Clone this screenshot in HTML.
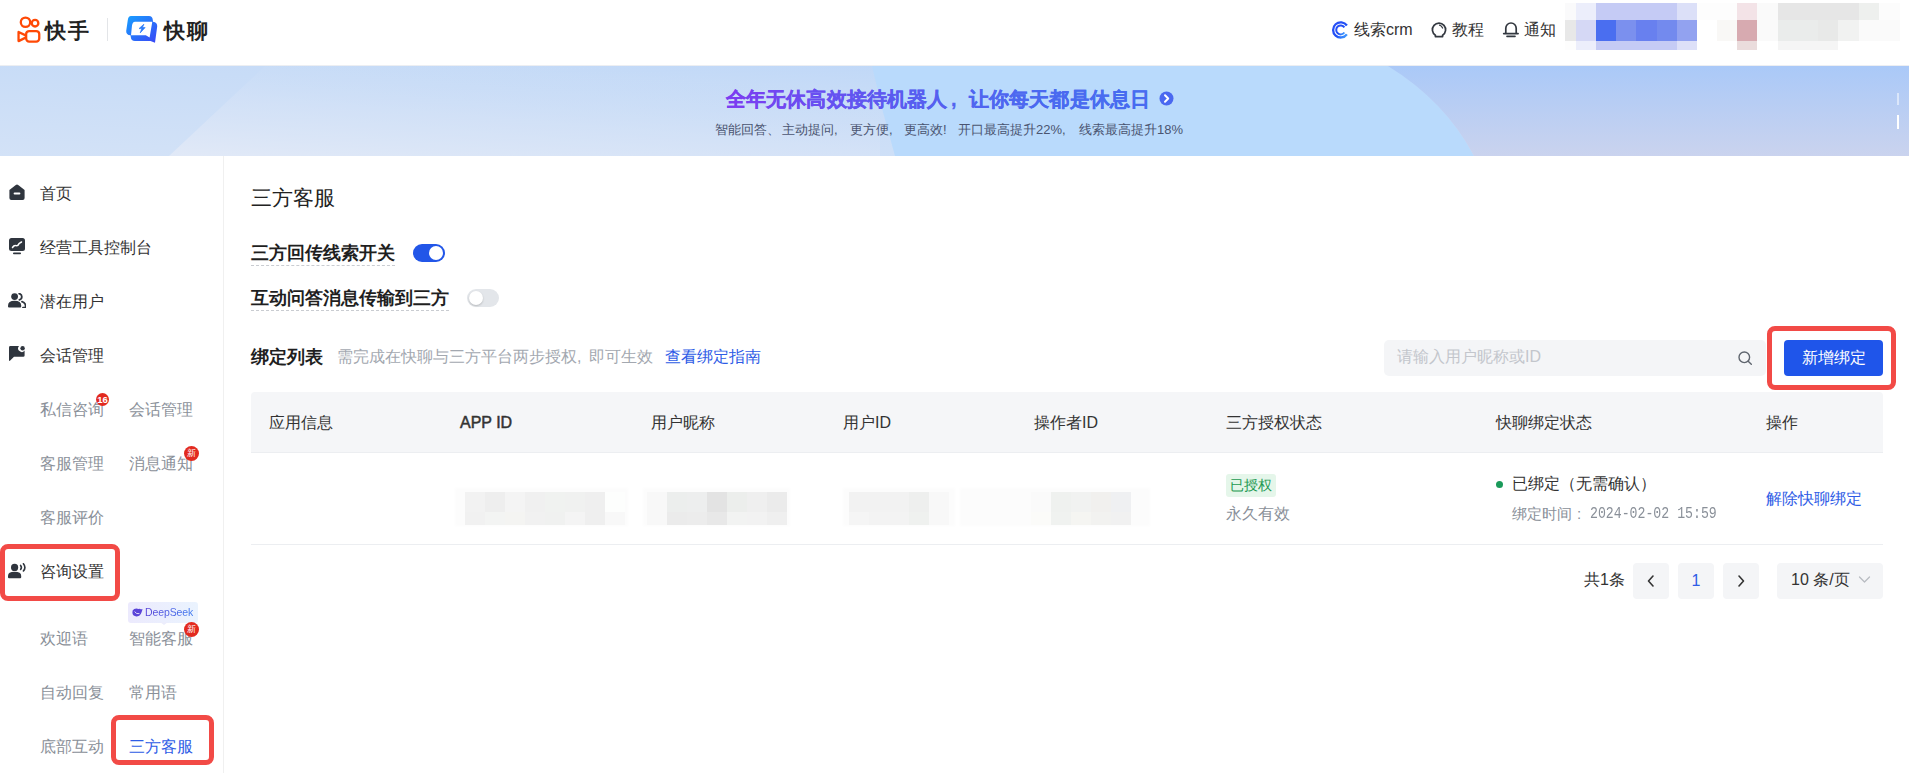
<!DOCTYPE html>
<html><head><meta charset="utf-8">
<style>
*{margin:0;padding:0;box-sizing:border-box}
html,body{width:1909px;height:773px;overflow:hidden;background:#fff;font-family:"Liberation Sans",sans-serif;color:#333}
.a{position:absolute;white-space:nowrap}
#hdr{position:absolute;left:0;top:0;width:1909px;height:66px;background:#fff;border-bottom:1px solid #eceef2}
#banner{position:absolute;left:0;top:66px;width:1909px;height:90px;overflow:hidden;background:#c9dbf6}
#side{position:absolute;left:0;top:156px;width:224px;height:617px;border-right:1px solid #f0f0f0;background:#fff}
.mi{font-size:16px;color:#333}
.si{font-size:16px;color:#8a9099}
.px{position:absolute}
.badge{position:absolute;width:15px;height:15px;border-radius:7.5px;background:#e22a1f;color:#fff;font-size:10px;font-weight:bold;text-align:center;line-height:15px}
.redbox{position:absolute;border:5px solid #f24a46;border-radius:8px}
.th{position:absolute;top:413px;font-size:16px;color:#333}
</style></head><body>

<div id="hdr">
  <!-- kuaishou logo -->
  <svg class="a" style="left:12px;top:12px" width="36" height="36" viewBox="0 0 36 36">
    <circle cx="13.5" cy="10.25" r="4.7" fill="none" stroke="#ff4906" stroke-width="2.3"/>
    <circle cx="23.05" cy="11.2" r="3.3" fill="none" stroke="#ff4906" stroke-width="2.3"/>
    <rect x="14.15" y="19.05" width="13.1" height="10.5" rx="3" fill="none" stroke="#ff4906" stroke-width="2.3"/>
    <path d="M14.15 23.6 L6.55 20 V29.1 L14.15 25.4" fill="none" stroke="#ff4906" stroke-width="2.3" stroke-linejoin="round"/>
  </svg>
  <div class="a" style="left:45px;top:16px;font-size:21px;color:#222;font-weight:bold;letter-spacing:1.5px;line-height:30px">快手</div>
  <div class="a" style="left:107px;top:18px;width:1px;height:23px;background:#e3e5e8"></div>
  <svg class="a" style="left:120px;top:10px" width="45" height="38" viewBox="0 0 45 38">
    <defs><linearGradient id="kl" x1="0" y1="0" x2="1" y2="1"><stop offset="0" stop-color="#18a0ff"/><stop offset="1" stop-color="#3a45f5"/></linearGradient></defs>
    <path d="M11 6 H29 Q32.5 6 32.8 10 L33 11.8 Q37.5 12.5 37.2 16.5 L35 32.8 L30.5 31 H15 Q11 31 10.8 27 L10.5 25.3 Q6 25 6.2 21 L7.8 10 Q8.3 6 11 6 Z" fill="url(#kl)"/>
    <path d="M15 11.7 H32.3 L29.6 27.4 L25.8 25.2 H11 L12 15.5 Q12.5 11.7 15 11.7 Z" fill="#fff"/>
    <path d="M23.9 14.2 L19 18.6 H21.8 L20.2 22.9 L25.1 17.6 H22.4 Z" fill="#2a7af8" stroke="#2a7af8" stroke-width="0.7" stroke-linejoin="round"/>
  </svg>
  <div class="a" style="left:164px;top:16px;font-size:21px;color:#222;font-weight:bold;letter-spacing:1.5px;line-height:30px">快聊</div>

  <!-- right -->
  <svg class="a" style="left:1328px;top:16px" width="30" height="28" viewBox="0 0 30 28">
    <defs><linearGradient id="crm" x1="0" y1="0" x2="1" y2="1"><stop offset="0" stop-color="#2a4ff6"/><stop offset="0.6" stop-color="#1f4ff5"/><stop offset="1" stop-color="#45a8ff"/></linearGradient></defs>
    <path d="M18.9 9.5 A7.6 7.6 0 1 0 18.9 18.3" fill="none" stroke="url(#crm)" stroke-width="2.3" stroke-linecap="butt"/>
    <path d="M16.4 11.3 A4.5 4.5 0 1 0 16.4 16.5" fill="none" stroke="url(#crm)" stroke-width="2" stroke-linecap="butt"/>
  </svg>
  <div class="a" style="left:1354px;top:19px;font-size:16px;line-height:22px;color:#333">线索crm</div>
  <svg class="a" style="left:1428px;top:16px" width="20" height="24" viewBox="0 0 20 24">
    <path d="M7.4 20.6 V19.2 A6.6 6.6 0 1 1 14.6 19.2 V20.6 Z" fill="none" stroke="#333840" stroke-width="1.7" stroke-linejoin="round"/>
    <path d="M11.6 9.2 Q13.6 9.8 14.6 12" fill="none" stroke="#333840" stroke-width="1.3" stroke-linecap="round"/>
  </svg>
  <div class="a" style="left:1452px;top:19px;font-size:16px;line-height:22px;color:#333">教程</div>
  <svg class="a" style="left:1500px;top:16px" width="22" height="24" viewBox="0 0 22 24">
    <path d="M5.8 17.6 V12.2 A5.2 5.2 0 0 1 16.2 12.2 V17.6" fill="none" stroke="#333840" stroke-width="1.7"/>
    <path d="M3.8 17.6 H18" stroke="#333840" stroke-width="1.9" stroke-linecap="round"/>
    <path d="M7 20.4 H15" stroke="#333840" stroke-width="1.6" stroke-linecap="round"/>
  </svg>
  <div class="a" style="left:1524px;top:19px;font-size:16px;line-height:22px;color:#333">通知</div>
  <div id="mosaic" style="position:absolute;left:0;top:0;width:1909px;height:66px;filter:blur(0.7px)">
<div class="a" style="left:1565px;top:3px;width:11px;height:17px;background:#fafafb"></div>
<div class="a" style="left:1576px;top:3px;width:20px;height:17px;background:#eceefb"></div>
<div class="a" style="left:1596px;top:3px;width:81px;height:17px;background:#c5cbf5"></div>
<div class="a" style="left:1677px;top:3px;width:20px;height:17px;background:#dce0f8"></div>
<div class="a" style="left:1697px;top:3px;width:40px;height:17px;background:#fdfdfd"></div>
<div class="a" style="left:1737px;top:3px;width:20px;height:17px;background:#f3e3e7"></div>
<div class="a" style="left:1757px;top:3px;width:21px;height:17px;background:#fafafa"></div>
<div class="a" style="left:1778px;top:3px;width:81px;height:17px;background:#e6e6e6"></div>
<div class="a" style="left:1859px;top:3px;width:20px;height:17px;background:#eef0ee"></div>
<div class="a" style="left:1879px;top:3px;width:21px;height:17px;background:#fcfcfc"></div>
<div class="a" style="left:1565px;top:20px;width:11px;height:21px;background:#e8e8e8"></div>
<div class="a" style="left:1576px;top:20px;width:20px;height:21px;background:#d5d8f5"></div>
<div class="a" style="left:1596px;top:20px;width:20px;height:21px;background:#4a6ef0"></div>
<div class="a" style="left:1616px;top:20px;width:20px;height:21px;background:#7b90ee"></div>
<div class="a" style="left:1636px;top:20px;width:21px;height:21px;background:#6880ef"></div>
<div class="a" style="left:1657px;top:20px;width:20px;height:21px;background:#738aee"></div>
<div class="a" style="left:1677px;top:20px;width:20px;height:21px;background:#92a2f0"></div>
<div class="a" style="left:1697px;top:20px;width:20px;height:21px;background:#ffffff"></div>
<div class="a" style="left:1717px;top:20px;width:20px;height:21px;background:#f9f8f6"></div>
<div class="a" style="left:1737px;top:20px;width:20px;height:21px;background:#d7aab0"></div>
<div class="a" style="left:1757px;top:20px;width:21px;height:21px;background:#fafafa"></div>
<div class="a" style="left:1778px;top:20px;width:40px;height:21px;background:#eaeceb"></div>
<div class="a" style="left:1818px;top:20px;width:20px;height:21px;background:#e8e9e8"></div>
<div class="a" style="left:1838px;top:20px;width:21px;height:21px;background:#f1f2f1"></div>
<div class="a" style="left:1859px;top:20px;width:41px;height:21px;background:#fafafa"></div>
<div class="a" style="left:1565px;top:41px;width:11px;height:9px;background:#fdfdfd"></div>
<div class="a" style="left:1576px;top:41px;width:20px;height:9px;background:#eceefb"></div>
<div class="a" style="left:1596px;top:41px;width:81px;height:9px;background:#c5cbf5"></div>
<div class="a" style="left:1677px;top:41px;width:20px;height:9px;background:#dde0f8"></div>
<div class="a" style="left:1737px;top:41px;width:20px;height:9px;background:#eadcdc"></div>
<div class="a" style="left:1778px;top:41px;width:60px;height:9px;background:#f5f5f5"></div>
</div>
</div>

<div id="banner">
  <svg width="1909" height="90" viewBox="0 0 1909 90" preserveAspectRatio="none" style="position:absolute;left:0;top:0">
    <defs>
      <linearGradient id="bg1" x1="0" y1="1" x2="1" y2="0">
        <stop offset="0" stop-color="#d3e2f7"/><stop offset="0.6" stop-color="#c6dbf7"/><stop offset="1" stop-color="#b5d2f8"/>
      </linearGradient>
      <linearGradient id="bg2" x1="0" y1="1" x2="0.6" y2="0">
        <stop offset="0" stop-color="#e3eaf7" stop-opacity="0.9"/><stop offset="0.5" stop-color="#d8e4f7" stop-opacity="0.5"/><stop offset="1" stop-color="#c8dcf6" stop-opacity="0"/>
      </linearGradient>
      <linearGradient id="bg3" x1="0" y1="0" x2="0" y2="1">
        <stop offset="0" stop-color="#aac9f8"/><stop offset="1" stop-color="#cad3ee"/>
      </linearGradient>
    </defs>
    <rect x="0" y="0" width="1909" height="90" fill="url(#bg1)"/>
    <path d="M265 0 L880 0 L880 90 L169 90 Z" fill="url(#bg2)"/>
    <path d="M872 0 L1388 0 Q1445 35 1474 90 L895 90 Q882 45 872 0 Z" fill="#b9dafc"/>
    <path d="M1388 0 L1909 0 L1909 90 L1474 90 Q1445 35 1388 0 Z" fill="url(#bg3)"/>
    <rect x="1897" y="27" width="2" height="12" fill="#fff" fill-opacity="0.5"/>
    <rect x="1897" y="49" width="2" height="14" fill="#fff"/>
  </svg>
  <div class="a" id="btitle" style="left:726px;top:19px;font-size:20px;line-height:28px;font-weight:bold;letter-spacing:0.1px"><span style="color:#7b3ef1;-webkit-text-stroke:0.3px #7b3ef1">全</span><span style="color:#7642f1;-webkit-text-stroke:0.3px #7642f1">年</span><span style="color:#7147f1;-webkit-text-stroke:0.3px #7147f1">无</span><span style="color:#6d4bf1;-webkit-text-stroke:0.3px #6d4bf1">休</span><span style="color:#694ff1;-webkit-text-stroke:0.3px #694ff1">高</span><span style="color:#6552f1;-webkit-text-stroke:0.3px #6552f1">效</span><span style="color:#6155f0;-webkit-text-stroke:0.3px #6155f0">接</span><span style="color:#5e59f0;-webkit-text-stroke:0.3px #5e59f0">待</span><span style="color:#5a5bf0;-webkit-text-stroke:0.3px #5a5bf0">机</span><span style="color:#575ef0;-webkit-text-stroke:0.3px #575ef0">器</span><span style="color:#5560f0;-webkit-text-stroke:0.3px #5560f0">人</span></div>
  <div class="a" style="left:951px;top:19px;font-size:20px;line-height:28px;font-weight:bold;letter-spacing:0.1px"><span style="color:#5263f0;-webkit-text-stroke:0.3px #5263f0">,</span></div>
  <div class="a" style="left:969px;top:19px;font-size:20px;line-height:28px;font-weight:bold;letter-spacing:0.1px"><span style="color:#5065f0;-webkit-text-stroke:0.3px #5065f0">让</span><span style="color:#4e66f0;-webkit-text-stroke:0.3px #4e66f0">你</span><span style="color:#4d68f0;-webkit-text-stroke:0.3px #4d68f0">每</span><span style="color:#4b69f0;-webkit-text-stroke:0.3px #4b69f0">天</span><span style="color:#4a6af0;-webkit-text-stroke:0.3px #4a6af0">都</span><span style="color:#496bf0;-webkit-text-stroke:0.3px #496bf0">是</span><span style="color:#496cf0;-webkit-text-stroke:0.3px #496cf0">休</span><span style="color:#486cf0;-webkit-text-stroke:0.3px #486cf0">息</span><span style="color:#486cf0;-webkit-text-stroke:0.3px #486cf0">日</span></div>
  <svg class="a" style="left:1159px;top:25px" width="15" height="15" viewBox="0 0 15 15"><circle cx="7.5" cy="7.5" r="7" fill="#4a68f0"/><path d="M6 4.3 L9.2 7.5 L6 10.7" fill="none" stroke="#fff" stroke-width="2" stroke-linecap="round" stroke-linejoin="round"/></svg>
  <div class="a" style="left:715px;top:55px;font-size:13px;line-height:18px;color:#4a5470">智能回答、</div><div class="a" style="left:782px;top:55px;font-size:13px;line-height:18px;color:#4a5470">主动提问,</div><div class="a" style="left:850px;top:55px;font-size:13px;line-height:18px;color:#4a5470">更方便,</div><div class="a" style="left:904px;top:55px;font-size:13px;line-height:18px;color:#4a5470">更高效!</div><div class="a" style="left:958px;top:55px;font-size:13px;line-height:18px;color:#4a5470">开口最高提升22%,</div><div class="a" style="left:1079px;top:55px;font-size:13px;line-height:18px;color:#4a5470">线索最高提升18%</div>
</div>

<div id="side">
  <!-- icons: coordinates relative to page, side top=155 -->
</div>
<!-- sidebar items (page coords) -->
<svg class="a" style="left:9px;top:184px" width="16" height="16" viewBox="0 0 16 16">
  <path d="M0.4 6 L6.8 1 Q8 0.1 9.2 1 L15.6 6 V14 Q15.6 16 13.6 16 H2.4 Q0.4 16 0.4 14 Z" fill="#2f353e"/>
  <rect x="4.6" y="8.6" width="6.8" height="2" rx="1" fill="#fff"/>
</svg>
<div class="a mi" style="left:40px;top:183px;line-height:22px">首页</div>

<svg class="a" style="left:9px;top:238px" width="16" height="17" viewBox="0 0 16 17">
  <rect x="0" y="0" width="16" height="13" rx="2.5" fill="#2f353e"/>
  <path d="M3.5 9.5 Q5 7 7 7.6 Q9 8.2 10.2 5.4 L12.5 4" fill="none" stroke="#fff" stroke-width="1.5" stroke-linecap="round"/>
  <rect x="4" y="14.6" width="8" height="1.6" rx="0.8" fill="#2f353e"/>
</svg>
<div class="a mi" style="left:40px;top:237px;line-height:22px">经营工具控制台</div>

<svg class="a" style="left:8px;top:293px" width="18" height="15" viewBox="0 0 18 15">
  <circle cx="6.6" cy="3.6" r="3.4" fill="#2f353e"/>
  <path d="M0 12.5 Q0 7.8 6.6 7.8 Q13.2 7.8 13.2 12.5 V13.6 Q13.2 14.6 12.2 14.6 H1 Q0 14.6 0 13.6 Z" fill="#2f353e"/>
  <path d="M11.2 0.6 Q13.8 1.2 13.8 3.8 Q13.8 6.2 11.4 6.8" fill="none" stroke="#2f353e" stroke-width="1.8" stroke-linecap="round"/>
  <path d="M14 8.6 Q17.6 9.8 17.6 13 V14.6 H15" fill="none" stroke="#2f353e" stroke-width="1.8" stroke-linecap="round" stroke-linejoin="round"/>
</svg>
<div class="a mi" style="left:40px;top:291px;line-height:22px">潜在用户</div>

<svg class="a" style="left:9px;top:346px" width="16" height="15" viewBox="0 0 16 15">
  <path d="M0 1.4 Q0 0 1.4 0 H10 A3.6 3.6 0 0 0 15.6 4.6 V9.4 Q15.6 10.8 14.2 10.8 H5 L1.2 14.6 Q0 15.4 0 14 Z" fill="#2f353e"/>
  <circle cx="13.6" cy="2.2" r="2.2" fill="#2f353e"/>
</svg>
<div class="a mi" style="left:40px;top:345px;line-height:22px">会话管理</div>

<div class="a si" style="left:40px;top:399px;line-height:22px">私信咨询</div>
<div class="badge" style="left:96px;top:393px;width:13px;height:13px;line-height:13px;font-size:9.5px">16</div>
<div class="a si" style="left:129px;top:399px;line-height:22px">会话管理</div>

<div class="a si" style="left:40px;top:453px;line-height:22px">客服管理</div>
<div class="a si" style="left:129px;top:453px;line-height:22px">消息通知</div>
<div class="badge" style="left:184px;top:446px;font-size:9px;font-weight:normal">新</div>

<div class="a si" style="left:40px;top:507px;line-height:22px">客服评价</div>

<svg class="a" style="left:8px;top:563px" width="19" height="16" viewBox="0 0 19 16">
  <circle cx="6.6" cy="4.4" r="3.6" fill="#2f353e"/>
  <path d="M0 13 Q0 8.8 6.6 8.8 Q13.2 8.8 13.2 13 V14.2 Q13.2 15.2 12.2 15.2 H1 Q0 15.2 0 14.2 Z" fill="#2f353e"/>
  <path d="M12.6 2.4 Q14.2 4.4 12.6 6.4" fill="none" stroke="#2f353e" stroke-width="1.6" stroke-linecap="round"/>
  <path d="M15.4 0.8 Q18.4 4.4 15.4 8" fill="none" stroke="#2f353e" stroke-width="1.6" stroke-linecap="round"/>
</svg>
<div class="a mi" style="left:40px;top:561px;line-height:22px">咨询设置</div>
<div class="redbox" style="left:0px;top:544px;width:120px;height:57px"></div>

<div class="a" style="left:128px;top:602px;width:70px;height:21px;background:linear-gradient(90deg,#eceafd,#eaf3fe);border-radius:3px"></div>
<div class="a" style="left:160px;top:622px;width:0;height:0;border-left:4px solid transparent;border-right:4px solid transparent;border-top:3px solid #ecedfc"></div>
<svg class="a" style="left:132px;top:608px" width="11" height="9" viewBox="0 0 11 9">
  <path d="M10.6 1 Q9.6 1.6 8.8 1.2 Q8 0.4 6.6 1 Q4.4 0.2 2.2 1 Q0 2.2 0.4 5 Q0.9 8.2 4.4 8.4 Q7.6 8.6 8.8 6 Q9.8 4 10.6 1 Z" fill="#5a44d8"/>
  <path d="M2.6 3.6 Q4.4 6.4 7.4 5.6" fill="none" stroke="#eceafc" stroke-width="0.9"/>
</svg>
<div class="a" style="left:145px;top:605px;font-size:10.5px;line-height:14px;letter-spacing:-0.1px;background:linear-gradient(90deg,#5a44d8,#3e7af0);-webkit-background-clip:text;background-clip:text;color:transparent">DeepSeek</div>

<div class="a si" style="left:40px;top:628px;line-height:22px">欢迎语</div>
<div class="a si" style="left:129px;top:628px;line-height:22px">智能客服</div>
<div class="badge" style="left:184px;top:622px;font-size:9px;font-weight:normal">新</div>

<div class="a si" style="left:40px;top:682px;line-height:22px">自动回复</div>
<div class="a si" style="left:129px;top:682px;line-height:22px">常用语</div>

<div class="a si" style="left:40px;top:736px;line-height:22px">底部互动</div>
<div class="a si" style="left:129px;top:736px;line-height:22px;color:#2e5ce6">三方客服</div>
<div class="redbox" style="left:111px;top:715px;width:103px;height:50px"></div>

<div id="main">
<div class="a" style="left:251px;top:184px;font-size:20.5px;line-height:28px;color:#222">三方客服</div>

<div class="a" style="left:251px;top:241px;font-size:18px;line-height:24px;color:#1f1f1f;font-weight:bold">三方回传线索开关</div>
<div class="a" style="left:251px;top:265px;width:144px;height:0;border-top:1px dashed #c9ccd1"></div>
<div class="a" style="left:413px;top:244px;width:32px;height:18px;border-radius:9px;background:#2256e8"></div>
<div class="a" style="left:429px;top:246px;width:14px;height:14px;border-radius:7px;background:#fff"></div>

<div class="a" style="left:251px;top:286px;font-size:18px;line-height:24px;color:#1f1f1f;font-weight:bold">互动问答消息传输到三方</div>
<div class="a" style="left:251px;top:310px;width:198px;height:0;border-top:1px dashed #c9ccd1"></div>
<div class="a" style="left:467px;top:289px;width:32px;height:18px;border-radius:9px;background:#e3e6ea"></div>
<div class="a" style="left:469px;top:291px;width:14px;height:14px;border-radius:7px;background:#fff;box-shadow:0 1px 2px rgba(0,0,0,0.2)"></div>

<div class="a" style="left:251px;top:345px;font-size:18px;line-height:24px;color:#1f1f1f;font-weight:bold">绑定列表</div>
<div class="a" style="left:337px;top:346px;font-size:16px;line-height:22px;color:#a3a8b0">需完成在快聊与三方平台两步授权,</div><div class="a" style="left:589px;top:346px;font-size:16px;line-height:22px;color:#a3a8b0">即可生效</div>
<div class="a" style="left:665px;top:346px;font-size:16px;line-height:22px;color:#2e5ce6">查看绑定指南</div>

<div class="a" style="left:1384px;top:340px;width:382px;height:36px;border-radius:5px;background:#f4f5f7"></div>
<div class="a" style="left:1397px;top:346px;font-size:16px;line-height:22px;color:#c3c6cc">请输入用户昵称或ID</div>
<svg class="a" style="left:1738px;top:351px" width="15" height="14" viewBox="0 0 15 14"><circle cx="6.3" cy="6.3" r="5.3" fill="none" stroke="#5f656e" stroke-width="1.4"/><path d="M10.2 10.2 L13.3 13.2" stroke="#5f656e" stroke-width="1.4" stroke-linecap="round"/></svg>

<div class="a" style="left:1784px;top:340px;width:99px;height:36px;border-radius:4px;background:#1f55ea;color:#fff;font-size:16px;line-height:36px;text-align:center">新增绑定</div>
<div class="redbox" style="left:1767px;top:326px;width:129px;height:64px"></div>

<!-- table -->
<div class="a" style="left:251px;top:392px;width:1632px;height:61px;background:#f5f6f8;border-radius:4px 4px 0 0;border-bottom:1px solid #eceef1"></div>
<div class="th" style="left:269px;line-height:20px">应用信息</div>
<div class="th" style="left:460px;line-height:20px;font-size:16px;-webkit-text-stroke:0.5px #333">APP ID</div>
<div class="th" style="left:651px;line-height:20px">用户昵称</div>
<div class="th" style="left:843px;line-height:20px">用户ID</div>
<div class="th" style="left:1034px;line-height:20px">操作者ID</div>
<div class="th" style="left:1226px;line-height:20px">三方授权状态</div>
<div class="th" style="left:1496px;line-height:20px">快聊绑定状态</div>
<div class="th" style="left:1766px;line-height:20px">操作</div>
<div class="a" style="left:251px;top:544px;width:1632px;height:1px;background:#eceef1"></div>

<div id="blur" style="position:absolute;left:0;top:0;width:1909px;height:773px;filter:blur(0.6px)">
<div class="a" style="left:455px;top:488px;width:173px;height:38px;background:#fcfcfc;filter:blur(1px)"></div>
<div class="a" style="left:465px;top:492px;width:20px;height:20px;background:#f2f2f2"></div>
<div class="a" style="left:485px;top:492px;width:20px;height:20px;background:#eeeeee"></div>
<div class="a" style="left:505px;top:492px;width:20px;height:20px;background:#f4f4f4"></div>
<div class="a" style="left:525px;top:492px;width:20px;height:20px;background:#f0f0f0"></div>
<div class="a" style="left:545px;top:492px;width:20px;height:20px;background:#f0f2f0"></div>
<div class="a" style="left:565px;top:492px;width:20px;height:20px;background:#f0f1f0"></div>
<div class="a" style="left:585px;top:492px;width:20px;height:20px;background:#efefef"></div>
<div class="a" style="left:605px;top:492px;width:20px;height:20px;background:#fdfefd"></div>
<div class="a" style="left:465px;top:512px;width:20px;height:13px;background:#f1f1f1"></div>
<div class="a" style="left:485px;top:512px;width:20px;height:13px;background:#f3f4f3"></div>
<div class="a" style="left:505px;top:512px;width:20px;height:13px;background:#f4f4f2"></div>
<div class="a" style="left:525px;top:512px;width:20px;height:13px;background:#f1f1f1"></div>
<div class="a" style="left:545px;top:512px;width:20px;height:13px;background:#f0f1f0"></div>
<div class="a" style="left:565px;top:512px;width:20px;height:13px;background:#f4f4f4"></div>
<div class="a" style="left:585px;top:512px;width:20px;height:13px;background:#efefef"></div>
<div class="a" style="left:605px;top:512px;width:20px;height:13px;background:#f8f8f8"></div>
<div class="a" style="left:643px;top:488px;width:147px;height:38px;background:#fcfcfc;filter:blur(1px)"></div>
<div class="a" style="left:647px;top:492px;width:20px;height:20px;background:#f8f8f8"></div>
<div class="a" style="left:667px;top:492px;width:20px;height:20px;background:#eceeed"></div>
<div class="a" style="left:687px;top:492px;width:20px;height:20px;background:#edeeee"></div>
<div class="a" style="left:707px;top:492px;width:20px;height:20px;background:#e3e3e3"></div>
<div class="a" style="left:727px;top:492px;width:20px;height:20px;background:#eceeec"></div>
<div class="a" style="left:747px;top:492px;width:20px;height:20px;background:#efefef"></div>
<div class="a" style="left:767px;top:492px;width:20px;height:20px;background:#ebebeb"></div>
<div class="a" style="left:647px;top:512px;width:20px;height:13px;background:#f8f8f8"></div>
<div class="a" style="left:667px;top:512px;width:20px;height:13px;background:#ebebeb"></div>
<div class="a" style="left:687px;top:512px;width:20px;height:13px;background:#ececec"></div>
<div class="a" style="left:707px;top:512px;width:20px;height:13px;background:#e8e8e8"></div>
<div class="a" style="left:727px;top:512px;width:20px;height:13px;background:#f2f3f2"></div>
<div class="a" style="left:747px;top:512px;width:20px;height:13px;background:#f2f2f2"></div>
<div class="a" style="left:767px;top:512px;width:20px;height:13px;background:#efefef"></div>
<div class="a" style="left:843px;top:488px;width:112px;height:38px;background:#fcfcfc;filter:blur(1px)"></div>
<div class="a" style="left:849px;top:492px;width:60px;height:20px;background:#f2f2f2"></div>
<div class="a" style="left:909px;top:492px;width:20px;height:20px;background:#eeefee"></div>
<div class="a" style="left:929px;top:492px;width:20px;height:20px;background:#f8f8f8"></div>
<div class="a" style="left:849px;top:512px;width:20px;height:13px;background:#f5f5f5"></div>
<div class="a" style="left:869px;top:512px;width:40px;height:13px;background:#f3f3f3"></div>
<div class="a" style="left:909px;top:512px;width:20px;height:13px;background:#eff1ef"></div>
<div class="a" style="left:929px;top:512px;width:20px;height:13px;background:#f8f8f8"></div>
<div class="a" style="left:960px;top:488px;width:190px;height:38px;background:#fcfcfc;filter:blur(1px)"></div>
<div class="a" style="left:1031px;top:492px;width:20px;height:20px;background:#fafafa"></div>
<div class="a" style="left:1051px;top:492px;width:20px;height:20px;background:#eff1ef"></div>
<div class="a" style="left:1071px;top:492px;width:20px;height:20px;background:#f1f2f1"></div>
<div class="a" style="left:1091px;top:492px;width:20px;height:20px;background:#f1f0ee"></div>
<div class="a" style="left:1111px;top:492px;width:20px;height:20px;background:#eff0f2"></div>
<div class="a" style="left:1031px;top:512px;width:20px;height:13px;background:#fbfbf9"></div>
<div class="a" style="left:1051px;top:512px;width:20px;height:13px;background:#f0f2f0"></div>
<div class="a" style="left:1071px;top:512px;width:20px;height:13px;background:#f5f5f2"></div>
<div class="a" style="left:1091px;top:512px;width:20px;height:13px;background:#f2f2f0"></div>
<div class="a" style="left:1111px;top:512px;width:20px;height:13px;background:#f1f1f1"></div>
</div>

<div class="a" style="left:1226px;top:474px;width:50px;height:23px;background:#e5f6ea;border-radius:3px;color:#1d9a52;font-size:14px;line-height:23px;text-align:center">已授权</div>
<div class="a" style="left:1226px;top:503px;font-size:16px;line-height:22px;color:#8a9099">永久有效</div>

<div class="a" style="left:1496px;top:481px;width:7px;height:7px;border-radius:4px;background:#1a9a5a"></div>
<div class="a" style="left:1512px;top:473px;font-size:16px;line-height:22px;color:#333">已绑定（无需确认）</div>
<div class="a" style="left:1512px;top:503px;font-size:15px;line-height:22px;color:#8a9099">绑定时间</div><div class="a" style="left:1577px;top:503px;font-size:15px;line-height:22px;color:#8a9099">:</div><div class="a" style="left:1590px;top:503px;font-size:16.5px;line-height:22px;color:#8a9099;font-family:'Liberation Mono',monospace;transform:scaleX(0.8);transform-origin:0 50%">2024-02-02 15:59</div>
<div class="a" style="left:1766px;top:488px;font-size:16px;line-height:22px;color:#2e5ce6">解除快聊绑定</div>

<!-- pagination -->
<div class="a" style="left:1584px;top:569px;font-size:16px;line-height:22px;color:#333">共1条</div>
<div class="a" style="left:1633px;top:563px;width:36px;height:36px;border-radius:4px;background:#f4f5f7"></div>
<svg class="a" style="left:1645px;top:574px" width="12" height="14" viewBox="0 0 12 14"><path d="M8 2 L3.5 7 L8 12" fill="none" stroke="#333" stroke-width="1.6" stroke-linecap="round" stroke-linejoin="round"/></svg>
<div class="a" style="left:1678px;top:563px;width:36px;height:36px;border-radius:4px;background:#f4f5f7;color:#2e5ce6;font-size:16px;line-height:36px;text-align:center">1</div>
<div class="a" style="left:1723px;top:563px;width:36px;height:36px;border-radius:4px;background:#f4f5f7"></div>
<svg class="a" style="left:1735px;top:574px" width="12" height="14" viewBox="0 0 12 14"><path d="M4 2 L8.5 7 L4 12" fill="none" stroke="#333" stroke-width="1.6" stroke-linecap="round" stroke-linejoin="round"/></svg>
<div class="a" style="left:1777px;top:563px;width:106px;height:36px;border-radius:4px;background:#f4f5f7"></div>
<div class="a" style="left:1791px;top:569px;font-size:16px;line-height:22px;color:#333">10 条/页</div>
<svg class="a" style="left:1858px;top:575px" width="13" height="9" viewBox="0 0 13 9"><path d="M1.5 2 L6.5 7 L11.5 2" fill="none" stroke="#b8bcc2" stroke-width="1.3" stroke-linecap="round" stroke-linejoin="round"/></svg>
</div>

</body></html>
